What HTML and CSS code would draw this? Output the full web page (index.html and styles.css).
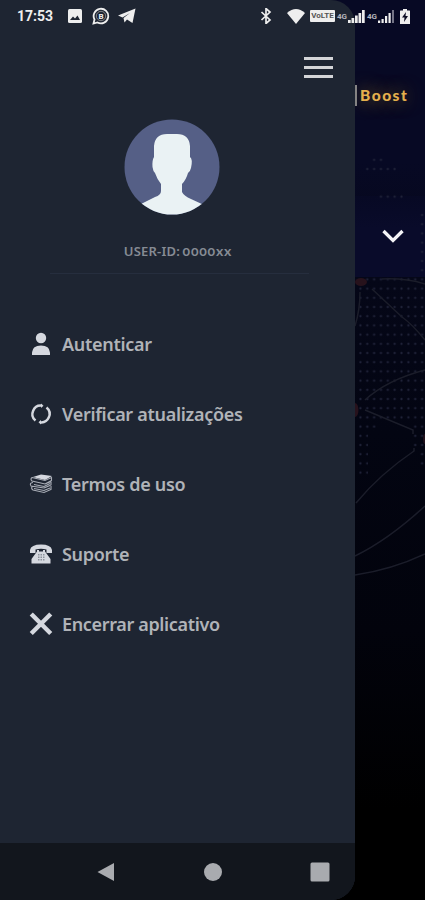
FILE: index.html
```
<!DOCTYPE html>
<html lang="pt-br">
    <head>
        <meta charset="UTF-8">
        <meta name="viewport" content="width=device-width, initial-scale=1.0">
        <title>Boost - Menu</title>
        <link rel="stylesheet" href="styles.css">
    </head>
    <body>
        <div class="tela">
            <!-- Tela principal, atrás do menu -->
            <main class="fundo">
                <svg class="mapa" viewBox="0 0 425 900">
                    <defs>
                        <pattern id="pontos" x="357" y="284" width="6.85" height="9.2" patternUnits="userSpaceOnUse">
                            <circle cx="3.4" cy="4.6" r="1.1" fill="#1f2238"/>
                        </pattern>
                        <linearGradient id="cartao" x1="0" y1="0" x2="0" y2="1">
                            <stop offset="0" stop-color="#070924"/>
                            <stop offset="0.4" stop-color="#090b2a"/>
                            <stop offset="1" stop-color="#090b2a"/>
                        </linearGradient>
                    </defs>
                    <path d="M355 196H425V277H355z" fill="url(#cartao)"/>
                    <path d="M417 210H425V465H418V450H412V425L398 420H376V428H368V476H357V284H365V275H417zM372 155H384V163H396V172H365V163H372zM379 192H403V201H379z" fill="url(#pontos)"/>
                    <ellipse cx="361" cy="282" rx="6" ry="4" fill="#27121c"/>
                    <ellipse cx="355" cy="410" rx="3.500" ry="7" fill="#27121c"/>
                    <ellipse cx="425" cy="439" rx="2" ry="5" fill="#21111c"/>
                    <g fill="none" stroke="#1b1d2a" stroke-width="1.500">
                        <path d="M382 279Q405 278 425 284M360 292Q360 310 355 326M372 289L402 317Q412 324 425 340"/>
                        <path d="M425 370Q387 380 365 400M365 410L413 430V434M414 448V451Q380 474 356 503"/>
                        <path d="M355 556Q388 540 425 506M355 575Q391 570 425 554"/>
                    </g>
                </svg>
                <div class="titulo">Boost</div>
                <svg class="seta" viewBox="0 0 24 16"><path d="M2.500 3L12 12.500L21.500 3" fill="none" stroke="#f4f4f7" stroke-width="3.300"/></svg>
            </main>

            <!-- Menu lateral -->
            <aside class="menu">
                <div class="topo">
                    <div class="hamburguer"><span></span><span></span><span></span></div>
                </div>
                <div class="perfil">
                    <svg class="avatar" viewBox="0 0 96 96">
                        <defs><clipPath id="circulo"><circle cx="48" cy="48" r="47.500"/></clipPath></defs>
                        <circle cx="48" cy="48" r="47.500" fill="#555f86"/>
                        <path clip-path="url(#circulo)" fill="#eaf2f4" d="M30 38V27Q31 15 43 15H53Q65 15 66 27V38Q69 40 67 49Q66 53 64 54Q62 61 58 65V73Q60 77 67 80L80 86L96 96H0L17 85L31 78Q37 76 37 72V65Q33 60 31 54Q29 52 28.500 48Q28 41 30 38z"/>
                    </svg>
                    <p class="usuario">USER-ID: <span class="codigo">0000xx</span></p>
                </div>
                <nav class="opcoes">
                    <a class="opcao">
                        <svg viewBox="0 0 24 24"><circle cx="12" cy="6" r="5.200"/><path d="M3 23V20.500Q3.500 13.500 12 13.500T21 20.500V23z"/></svg>
                        <span>Autenticar</span>
                    </a>
                    <a class="opcao">
                        <svg viewBox="0 0 24 24"><path class="traco" d="M6.500 18.500A8.400 8.400 0 0 1 13 3.700M17.500 5.500A8.400 8.400 0 0 1 11 20.300"/><path d="M12 1.500L14.500 3.700L12 6zM12 18L9.500 20.300L12 22.500z"/></svg>
                        <span>Verificar atualizações</span>
                    </a>
                    <a class="opcao">
                        <svg viewBox="0 0 24 24"><path d="M4 5L12 2.500L23 4L16 8z"/><path class="fino" d="M3 5.500L16 8.500L22.500 5.500V8.500L16 12L3 9Q1 7 3 5.500M4 10.500Q0 11 2 14L15 16L22 13V9.500M16 12L22 9.500M3 14.500Q2 17 4 18L15 20.500L22 17.500V14M15 16L21 13.500M5 12.500L15 14.500L21 11.500M5 16.500L15 18.500L21 16"/></svg>
                        <span>Termos de uso</span>
                    </a>
                    <a class="opcao">
                        <svg viewBox="0 0 24 24"><path d="M1 11V8Q2 2.500 12 2.500T23 8V11H17.500V7.500Q12 6 6.500 7.500V11z"/><path d="M8 8H10V9.500H14V8H16V9.500L21.500 17V21.500H2.500V17L8 9.500z"/><g fill="#8d929c"><path d="M9 12H10.500V13.500H9zM11.500 12H13V13.500H11.500zM14 12H15.500V13.500H14zM9 14.500H10.500V16H9zM11.500 14.500H13V16H11.500zM14 14.500H15.500V16H14zM9 17H10.500V18.500H9zM11.500 17H13V18.500H11.500zM14 17H15.500V18.500H14z"/></g></svg>
                        <span>Suporte</span>
                    </a>
                    <a class="opcao">
                        <svg viewBox="0 0 24 24"><path d="M3.800 3.500L20.200 20M20.200 3.500L3.800 20" fill="none" stroke="#d5d8df" stroke-width="4.400" stroke-linecap="square"/></svg>
                        <span class="encerrar">Encerrar aplicativo</span>
                    </a>
                </nav>
                <footer class="navegacao">
                    <svg viewBox="0 0 20 20"><path d="M1.500 10L18 1V19z"/></svg>
                    <svg viewBox="0 0 20 20"><circle cx="10" cy="10" r="9"/></svg>
                    <svg viewBox="0 0 20 20"><rect x="0.500" y="0.500" width="19" height="19" rx="1.500"/></svg>
                </footer>
            </aside>

            <!-- Barra de status do aparelho -->
            <header class="status">
                <span class="hora">17:53</span>
                <svg class="galeria" viewBox="0 0 14 14"><rect width="14" height="14" rx="1.500"/><path d="M2 11L5 7.500L7 9.500L9.500 6.500L12 11z" fill="#1e2532"/></svg>
                <svg class="mensagem" viewBox="0 0 18 18"><path d="M1.500 16.500L2.500 12.500A7.300 7.300 0 1 1 5.500 15.500z" fill="none" stroke="#eee" stroke-width="1.800"/><circle cx="9" cy="9" r="4.700" fill="none" stroke="#aaa" stroke-width="0.700"/><text x="9" y="12" text-anchor="middle" font-size="8" font-weight="700">B</text></svg>
                <svg class="telegrama" viewBox="0 0 18 16"><path d="M0 7.500L17.500 0.500L14.500 15L9 11.500L6.500 14.500L5.500 10L12 5L4.500 9.500z"/></svg>
                <svg class="bluetooth" viewBox="0 0 12 16"><path d="M1.500 4L10 12L6 15.500V0.500L10 4L1.500 12" fill="none" stroke="#eee" stroke-width="1.700"/></svg>
                <svg class="wifi" viewBox="0 0 18 15"><path d="M0 4Q9 -4 18 4L9 15z"/></svg>
                <span class="volte">VoLTE</span>
                <span class="rede">4G</span>
                <svg class="sinal" viewBox="0 0 17 13"><path d="M0 10H2.700V13H0zM3.500 8H6.200V13H3.500zM7 5.500H9.700V13H7zM10.500 3H13.200V13H10.500zM14 0H16.700V13H14z"/></svg>
                <span class="rede">4G</span>
                <svg class="sinal" viewBox="0 0 17 13"><path d="M0 10.500H2.200V13H0zM3.500 9H5.700V13H3.500zM7 6H9.200V13H7zM10.500 3H12.700V13H10.500z"/><path d="M14 0H16V13H14z" fill="#747486"/></svg>
                <svg class="bateria" viewBox="0 0 10 15"><path d="M3 0H7V1.500H9.500Q10 1.500 10 2V15H0V2Q0 1.500 0.500 1.500H3z"/><path d="M6 3L2 8.500H4.500L4 13L8 7H5.500z" fill="#0b0c23"/></svg>
            </header>
        </div>
    </body>
</html>
```
FILE: styles.css
```
*{
    margin: 0;
    padding: 0;
    box-sizing: border-box;
}
body{
    background-color: #000;
    font-family: 'Noto Sans', 'Open Sans', sans-serif;
}
svg{
    display: block;
    flex: none;
}
.tela{
    display: grid;
    width: 425px;
    height: 900px;
    overflow: hidden;
}
.fundo, .menu, .status{
    grid-area: 1 / 1;
}
.fundo{
    display: grid;
    background: linear-gradient(#070924, #070924 18%, #050718 31%, #030512 48%, #02030c 70%, #000 90%);
}
.mapa, .titulo, .seta{
    grid-area: 1 / 1;
}
.mapa{
    width: 425px;
    height: 900px;
}
.titulo{
    align-self: start;
    justify-self: end;
    width: 71px;
    height: 21px;
    margin-top: 85px;
    padding-left: 3px;
    border-left: 3px solid #85878c;
    color: #e5b04d;
    font: 900 15.5px/21px Lato, sans-serif;
    letter-spacing: 1.5px;
    text-shadow: 0 0 18px #8a6a24;
}
.seta{
    width: 24px;
    height: 16px;
    margin: 228px 0 0 381px;
}
.menu{
    display: flex;
    flex-direction: column;
    width: 355px;
    height: 900px;
    background-color: #1e2532;
    border-radius: 0 24px 24px 0;
    overflow: hidden;
}
.topo{
    display: flex;
    justify-content: flex-end;
    padding: 57px 22px 0 0;
}
.hamburguer{
    display: flex;
    flex-direction: column;
    gap: 6px;
    width: 29px;
}
.hamburguer span{
    height: 3px;
    background-color: #d4d5d8;
}
.perfil{
    display: flex;
    flex-direction: column;
    align-items: center;
    height: 196px;
    margin: 0 46px 0 50px;
    padding-top: 41px;
    border-bottom: 1px solid #262e3e;
}
.avatar{
    width: 96px;
    height: 96px;
    margin-right: 15px;
}
.usuario{
    margin-top: 27px;
    margin-right: 3px;
    color: #868b94;
    font-size: 13px;
    font-weight: 600;
    line-height: 18px;
    letter-spacing: 0.2px;
    white-space: nowrap;
}
.codigo{
    margin-left: -1px;
    font: 700 14px Lato, sans-serif;
    font-feature-settings: "onum";
    letter-spacing: 0.8px;
}
.opcoes{
    display: flex;
    flex-direction: column;
    flex: 1;
    padding: 35px 0 0 29px;
}
.opcao{
    display: flex;
    align-items: center;
    gap: 9px;
    height: 70px;
    color: #b0b3b8;
    font-size: 18px;
    font-weight: 600;
    letter-spacing: -0.3px;
    white-space: nowrap;
}
.encerrar{
    letter-spacing: -0.35px;
}
.opcao svg{
    width: 24px;
    height: 24px;
    fill: #d5d8df;
}
.opcao .traco{
    fill: none;
    stroke: #d5d8df;
    stroke-width: 2.5;
}
.opcao .fino{
    fill: none;
    stroke: #a9adb6;
    stroke-width: 1.1;
}
.navegacao{
    display: flex;
    align-items: center;
    gap: 87px;
    height: 57px;
    padding-left: 96px;
    background-color: #12161d;
}
.navegacao svg{
    width: 20px;
    height: 20px;
    fill: #a9abaf;
}
.status{
    display: flex;
    align-items: center;
    height: 32px;
    padding-left: 17px;
    color: #eee;
    z-index: 1;
}
.status svg{
    fill: #eee;
}
.hora{
    width: 51px;
    font: 700 14px Roboto, sans-serif;
}
.galeria{
    width: 14px;
    height: 14px;
}
.mensagem{
    width: 18px;
    height: 18px;
    margin-left: 10px;
    font-family: Roboto, sans-serif;
}
.telegrama{
    width: 18px;
    height: 16px;
    margin-left: 8px;
}
.bluetooth{
    width: 12px;
    height: 16px;
    margin-left: 124px;
}
.wifi{
    width: 18px;
    height: 15px;
    margin-left: 15px;
}
.volte{
    width: 25px;
    height: 12px;
    margin-left: 5px;
    border-radius: 1px;
    background-color: #eee;
    color: #555;
    font: 700 8px/12px Roboto, sans-serif;
    text-align: center;
}
.rede{
    width: 10px;
    margin: 0 1px 0 2px;
    color: #b5b6bf;
    font: 700 8px Roboto, sans-serif;
}
.sinal{
    width: 17px;
    height: 13px;
}
.bateria{
    width: 10px;
    height: 15px;
    margin-left: 5px;
}
```
